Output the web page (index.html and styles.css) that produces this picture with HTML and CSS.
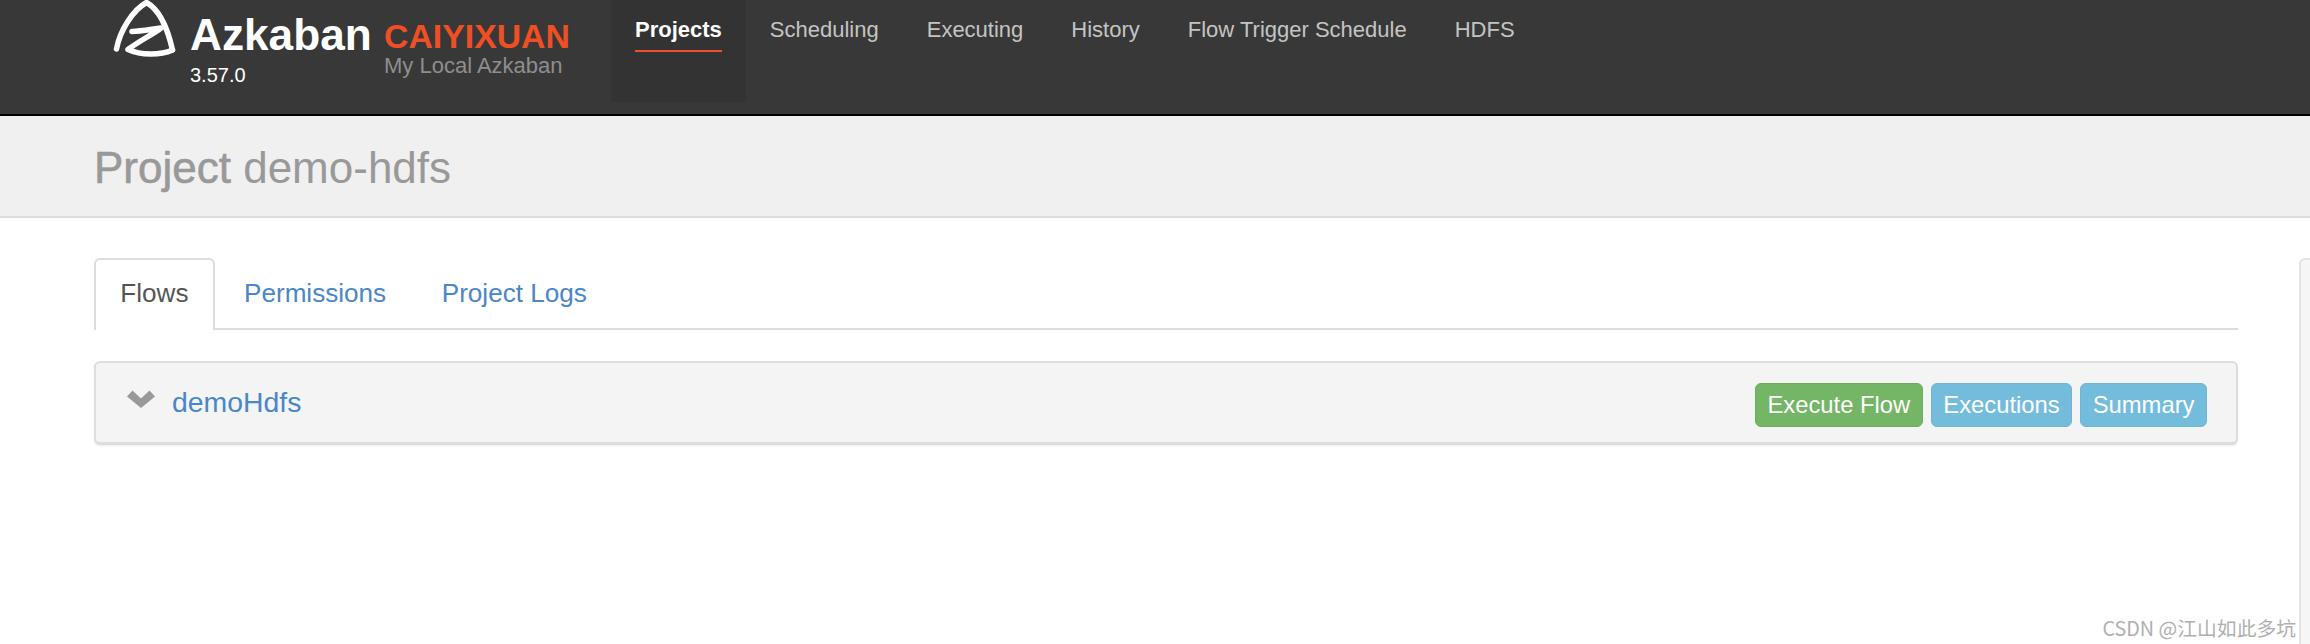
FILE: index.html
```html
<!DOCTYPE html>
<html lang="en">
<head>
<meta charset="utf-8">
<title>Azkaban - Project demo-hdfs</title>
<link rel="stylesheet" href="styles.css">
</head>
<body>
<header class="topbar">
  <div class="brand">
    <svg class="logo" viewBox="100 0 82 70" width="82" height="70" aria-hidden="true">
      <g class="logo-lines">
        <path d="M116.500 49C120 30 133 10 146.500 2.500C160 10 168 30 172.500 50"/>
        <path d="M132 31.500C140 31.500 150 29.500 161 28C152 35 139 41 128 49.500C141 55.500 160 55.500 172.500 50"/>
      </g>
    </svg>
    <div class="brand-main">
      <div class="brand-name">Azkaban</div>
      <div class="brand-version">3.57.0</div>
    </div>
    <div class="brand-env">
      <div class="env-name">CAIYIXUAN</div>
      <div class="env-desc">My Local Azkaban</div>
    </div>
  </div>
  <nav class="mainnav">
    <a class="navitem active" href="#"><span class="navlabel">Projects</span></a>
    <a class="navitem" href="#"><span class="navlabel">Scheduling</span></a>
    <a class="navitem" href="#"><span class="navlabel">Executing</span></a>
    <a class="navitem" href="#"><span class="navlabel">History</span></a>
    <a class="navitem" href="#"><span class="navlabel">Flow Trigger Schedule</span></a>
    <a class="navitem" href="#"><span class="navlabel">HDFS</span></a>
  </nav>
</header>
<section class="pagehead">
  <h1 class="pagetitle"><span class="pagetitle-key">Project</span> demo-hdfs</h1>
</section>
<div class="content">
  <main class="maincol">
    <ul class="tabs">
      <li class="tab active"><a href="#">Flows</a></li>
      <li class="tab"><a href="#">Permissions</a></li>
      <li class="tab"><a href="#">Project Logs</a></li>
    </ul>
    <div class="flowpanel">
      <svg class="chevron" viewBox="0 0 28 18" width="28" height="18" aria-hidden="true">
        <path d="M0 6.500L5.500 0.500L14 8.500L22.500 0.500L28 6.500L14 18Z"/>
      </svg>
      <a class="flowname" href="#">demoHdfs</a>
      <div class="flowactions">
        <a class="btn btn-success" href="#">Execute Flow</a>
        <a class="btn btn-info" href="#">Executions</a>
        <a class="btn btn-info" href="#">Summary</a>
      </div>
    </div>
  </main>
  <aside class="sidepanel"></aside>
</div>
<div class="watermark">CSDN @江山如此多坑</div>
</body>
</html>
```
FILE: styles.css
```css
* { box-sizing: border-box; }
html, body { margin: 0; padding: 0; }
body {
  position: relative;
  display: flex;
  flex-direction: column;
  height: 100vh;
  overflow: hidden;
  background: #fff;
  font-family: "Liberation Sans", Arial, sans-serif;
  color: #333;
}
a { text-decoration: none; }

.topbar {
  display: flex;
  height: 116px;
  padding-left: 100px;
  background: #383838;
  border-bottom: 2px solid #000;
  flex: none;
}
.brand { display: flex; width: 511px; }
.logo { flex: none; margin-right: 8px; filter: blur(0.5px); }
.logo-lines {
  fill: none;
  stroke: #fff;
  stroke-width: 5.500;
  stroke-linecap: round;
  stroke-linejoin: round;
}
.brand-main { width: 194px; padding-top: 13px; flex: none; }
.brand-name { font-size: 44.200px; line-height: 44px; font-weight: 700; color: #fff; }
.brand-version { margin-top: 6px; font-size: 20px; line-height: 24px; color: #fff; }
.brand-env { padding-top: 18px; }
.env-name { font-size: 33.800px; line-height: 36px; font-weight: 700; color: #f04e23; }
.env-desc { font-size: 22px; line-height: 24px; color: #8e8e8e; }

.mainnav { display: flex; align-items: flex-start; }
.navitem {
  height: 102px;
  padding: 18px 24px 0;
  font-size: 22px;
  line-height: 24px;
  color: #c4c4c4;
}
.navlabel { display: inline-block; padding-bottom: 8px; }
.navitem.active { background: #333; color: #fff; font-weight: 700; }
.navitem.active .navlabel { border-bottom: 2px solid #f04e23; }

.pagehead {
  flex: none;
  height: 102px;
  padding: 27px 0 0 94px;
  background: #f0f0f0;
  border-bottom: 2px solid #ddd;
}
.pagetitle {
  margin: 0;
  font-size: 44px;
  line-height: 50px;
  font-weight: 400;
  color: #999;
}
.pagetitle-key { -webkit-text-stroke: 0.600px #999; }

.content { display: flex; flex: 1; min-height: 0; padding-top: 40px; }
.maincol { width: 2144px; margin-left: 94px; flex: none; }

.tabs {
  display: flex;
  margin: 0 0 31px;
  padding: 0;
  list-style: none;
  border-bottom: 2px solid #ddd;
}
.tab {
  margin: 0 3px -2px 0;
  padding: 18px 24.300px 22px;
  border: 2px solid transparent;
  border-bottom: 0;
  border-radius: 6px 6px 0 0;
  font-size: 26.100px;
  line-height: 30px;
}
.tab a { color: #4a86c8; }
.tab.active { background: #fff; border-color: #ddd; }
.tab.active a { color: #555; }

.flowpanel {
  display: flex;
  align-items: center;
  height: 84px;
  padding: 0 29px 2px 31px;
  background: #f4f4f4;
  border: 2px solid #ddd;
  border-bottom-width: 3px;
  border-radius: 6px;
  box-shadow: 0 1px 2px rgba(0, 0, 0, 0.08);
}
.chevron { flex: none; margin: -5px 17px 0 0; fill: #999; }
.flowname { font-size: 28.400px; line-height: 32px; color: #4a86c8; }
.flowactions { display: flex; gap: 8px; margin: 6px 0 0 auto; }
.btn {
  height: 44px;
  padding: 0 11.500px;
  border: 1px solid;
  border-radius: 6px;
  font-size: 23.800px;
  line-height: 42px;
  color: #fff;
}
.btn-success { background: #74b566; border-color: #6aac5d; }
.btn-info { background: #74bcdc; border-color: #6db6d8; }

.sidepanel {
  flex: 1;
  margin-left: 61px;
  background: #f6f6f6;
  border: 2px solid #e4e4e4;
  border-width: 2px 0 0 2px;
  border-top-left-radius: 6px;
}

.watermark {
  position: absolute;
  right: 14px;
  bottom: 4px;
  font-family: "Noto Sans CJK SC", "Noto Sans", sans-serif;
  font-size: 19.800px;
  line-height: 24px;
  color: #b0b0b0;
}
```
